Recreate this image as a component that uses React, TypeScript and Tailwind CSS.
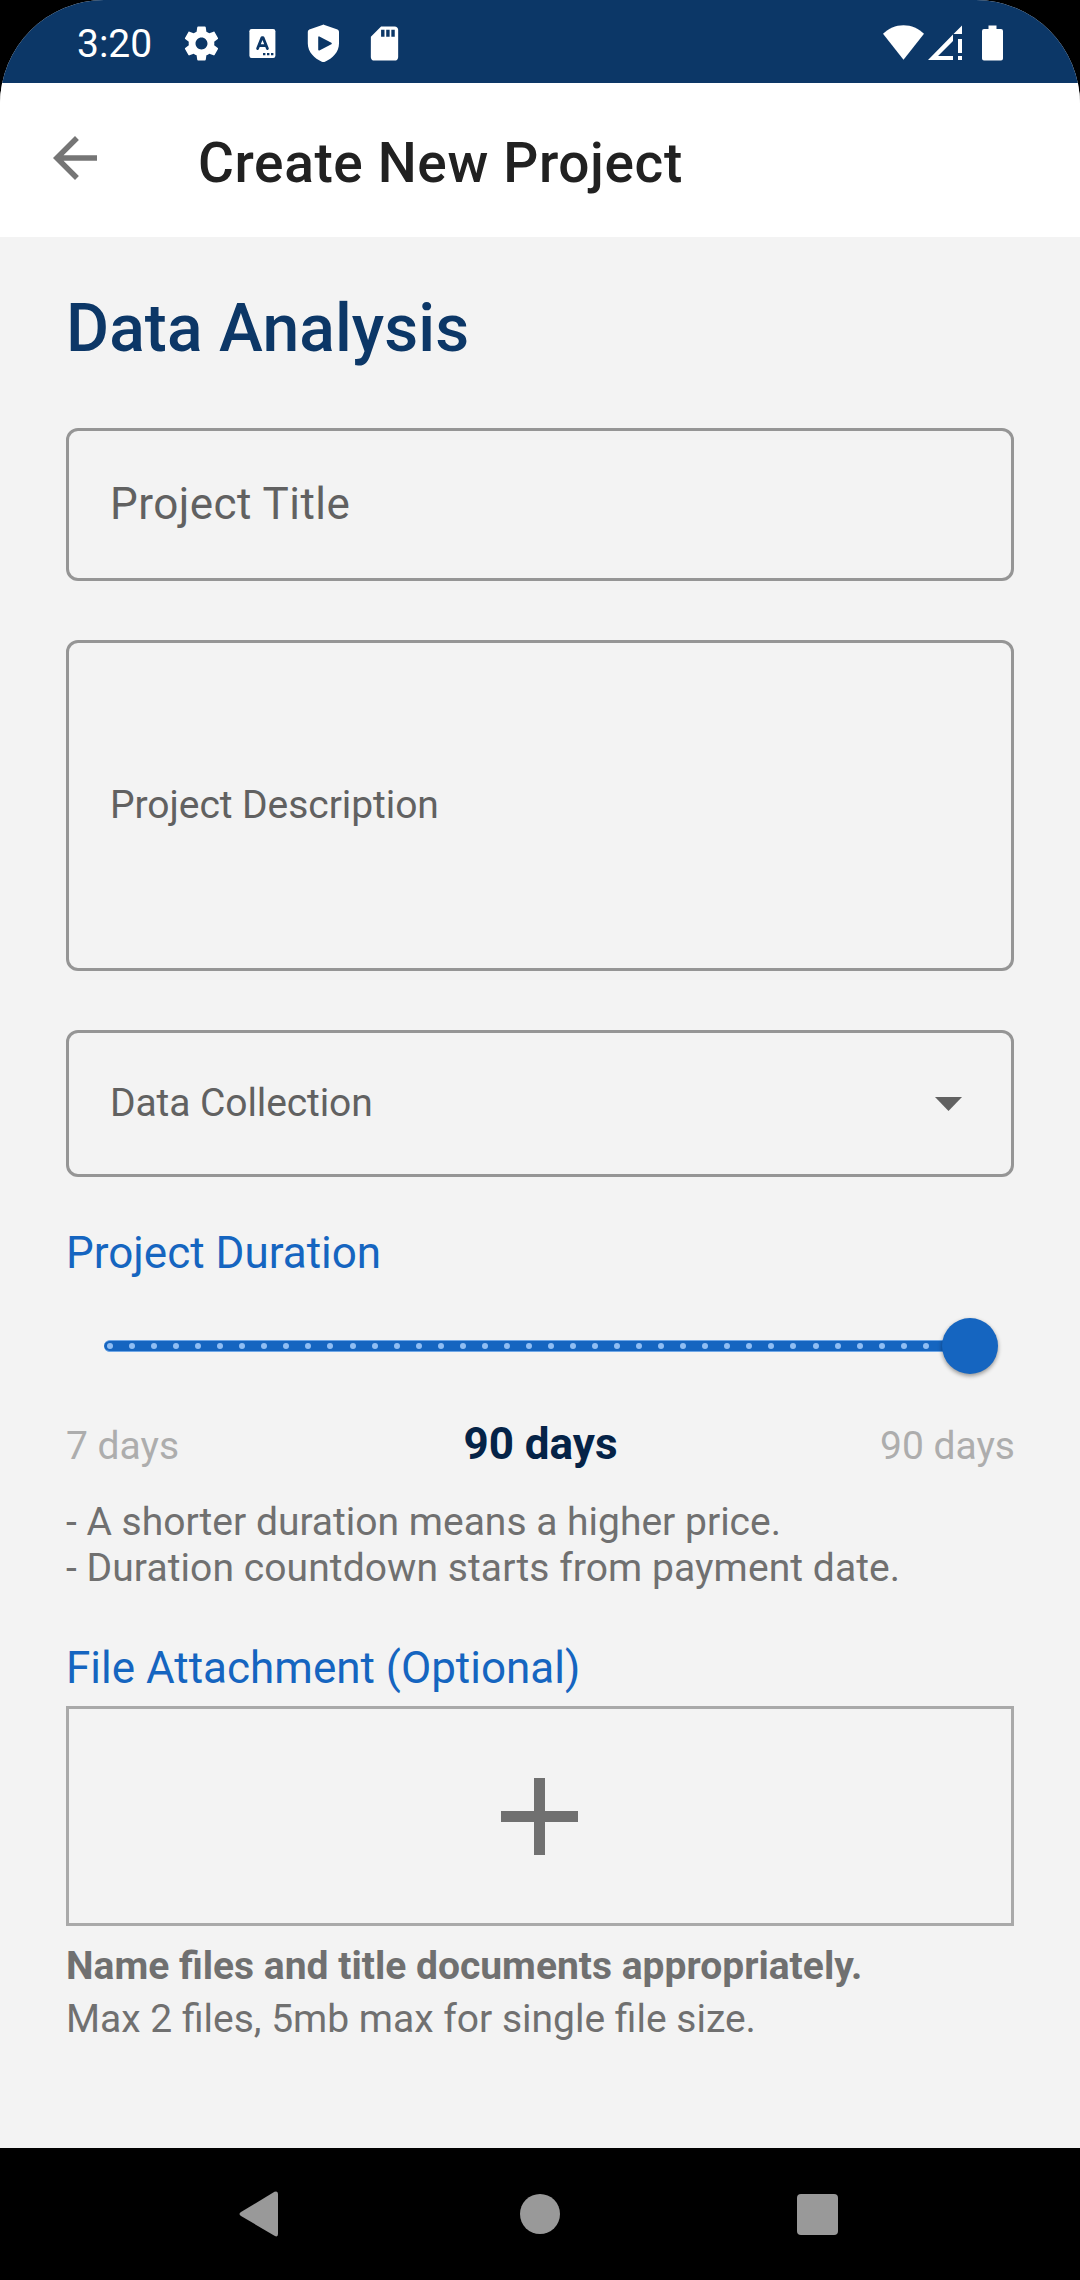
import React, { useState } from 'react';

const MIN_DAYS = 7;
const MAX_DAYS = 90;
const TICKS = 40;

function GearIcon() {
  return (
    <svg className="w-[41px] h-[41px]" viewBox="0 0 24 24" fill="currentColor">
      <path d="M19.43 12.98c.04-.32.07-.64.07-.98s-.03-.66-.07-.98l2.11-1.65c.19-.15.24-.42.12-.64l-2-3.46c-.12-.22-.39-.3-.61-.22l-2.49 1c-.52-.4-1.08-.73-1.69-.98l-.38-2.65C14.46 2.18 14.25 2 14 2h-4c-.25 0-.46.18-.49.42l-.38 2.65c-.61.25-1.17.59-1.69.98l-2.49-1c-.23-.09-.49 0-.61.22l-2 3.46c-.13.22-.07.49.12.64l2.11 1.65c-.04.32-.07.65-.07.98s.03.66.07.98l-2.11 1.65c-.19.15-.24.42-.12.64l2 3.46c.12.22.39.3.61.22l2.49-1c.52.4 1.08.73 1.69.98l.38 2.65c.03.24.24.42.49.42h4c.25 0 .46-.18.49-.42l.38-2.65c.61-.25 1.17-.59 1.69-.98l2.49 1c.23.09.49 0 .61-.22l2-3.46c.12-.22.07-.49-.12-.64l-2.11-1.65zM12 15.5c-1.93 0-3.5-1.57-3.5-3.5s1.57-3.5 3.5-3.5 3.5 1.57 3.5 3.5-1.57 3.5-3.5 3.5z" />
    </svg>
  );
}

function KeyboardIcon() {
  return (
    <svg className="w-[41px] h-[41px]" viewBox="0 0 41 41">
      <rect x="7.4" y="6" width="26" height="29" rx="2.2" fill="#fff" />
      <path
        d="M15.6 25.600 20 14.600h1L25.400 25.600M17.500 22.600h6"
        fill="none"
        stroke="#0c3767"
        strokeWidth="2.8"
        strokeLinecap="round"
        strokeLinejoin="round"
      />
      <path d="M21 30h2.400v2.200H21zM25 30h2.400v2.200H25zM29 30h2.400v2.200H29z" fill="#0c3767" />
    </svg>
  );
}

function ShieldIcon() {
  return (
    <svg className="w-[41px] h-[41px]" viewBox="0 0 41 41">
      <path
        d="M19.300 1.900Q20.400 1.300 21.500 1.900L34.500 6.500Q36 7.200 36 8.700V20.500C36 29 29.500 35.500 22 38.700Q20.400 39.300 18.800 38.700C11.500 35.500 4.800 29 4.800 20.500V8.700Q4.800 7.200 6.300 6.500z"
        fill="#fff"
      />
      <path
        d="M16 14.200v12.600L28 20.500z"
        fill="#0c3767"
        stroke="#0c3767"
        strokeWidth="1.600"
        strokeLinejoin="round"
      />
    </svg>
  );
}

function SdCardIcon() {
  return (
    <svg className="w-[41px] h-[41px]" viewBox="0 0 24 24" fill="currentColor">
      <path d="M18 2h-8L4.020 8 4 20c0 1.100.9 2 2 2h12c1.100 0 2-.9 2-2V4c0-1.100-.9-2-2-2zm-6 6h-2V4h2v4zm3 0h-2V4h2v4zm3 0h-2V4h2v4z" />
    </svg>
  );
}

function StatusBar() {
  return (
    <div className="h-[83px] bg-[#0c3767] text-white flex items-start justify-between pl-[77px] pr-[77px]">
      <div className="flex items-start pt-[23px]">
        <span className="w-[104px] text-[39px] leading-[43px]">3:20</span>
        <div className="flex gap-5">
          <GearIcon />
          <KeyboardIcon />
          <ShieldIcon />
          <SdCardIcon />
        </div>
      </div>
      <div className="flex pt-[25px]">
        {/* Wifi */}
        <svg className="w-[41px] h-[36px]" viewBox="0 0 41 36" fill="currentColor">
          <path d="M0 8.800C5.500 3.500 12.500.2 20.500.2S35.500 3.500 41 8.800L20.500 34.800z" />
        </svg>
        {/* Mobile signal */}
        <svg className="w-[35px] h-[36px] ml-[4px]" viewBox="0 0 35 36" fill="currentColor">
          <path d="M34 .5V9h-8.500zM25 9.500V16L10 31h15v4H0z" />
          <path d="M30 14h4v14h-4zM30 31h4v4h-4z" />
        </svg>
        {/* Battery */}
        <svg className="w-[21px] h-[36px] ml-[19px]" viewBox="0 0 21 36" fill="currentColor">
          <path d="M6.500.5h8V4H19a2 2 0 0 1 2 2v27.500a2 2 0 0 1-2 2H2a2 2 0 0 1-2-2V6a2 2 0 0 1 2-2h4.500z" />
        </svg>
      </div>
    </div>
  );
}

function AppBar() {
  return (
    <header className="h-[154px] bg-white flex items-start pl-[42px]">
      <button className="mt-[42px] text-[#757575]" aria-label="Back">
        <svg className="w-[66px] h-[66px]" viewBox="0 0 24 24" fill="currentColor">
          <path d="M20 11H7.830l5.590-5.590L12 4l-8 8 8 8 1.410-1.410L7.830 13H20v-2z" />
        </svg>
      </button>
      <h1 className="ml-[90px] mt-[48px] text-[55px] leading-[64px] tracking-[0.62px] font-medium text-[#212121]">
        Create New Project
      </h1>
    </header>
  );
}

function DurationSlider({ value }: { value: number }) {
  const percent = ((value - MIN_DAYS) / (MAX_DAYS - MIN_DAYS)) * 100;

  return (
    <div className="mt-[39px] h-14 pl-[38px] pr-[38px] flex items-center">
      <div className="relative w-full h-3 rounded-full bg-[#1565c0] border-y border-[#6ea6e6] px-[3px] flex items-center justify-between">
        {Array.from({ length: TICKS }, (_, i) => (
          <span key={i} className="w-[6px] h-[6px] rounded-full bg-[#8fbdf3]" />
        ))}
        <div
          className="absolute -top-[23px] w-14 h-14 -ml-[34px] rounded-full bg-[#1565c0] shadow-[0_2px_4px_rgba(0,0,0,0.4)]"
          style={{ left: `${percent}%` }}
        />
      </div>
    </div>
  );
}

export default function App() {
  const [duration] = useState(MAX_DAYS);

  return (
    <div className="w-[1080px] h-[2280px] bg-black font-['Roboto',sans-serif] flex flex-col">
      <div className="flex-1 rounded-t-[104px] overflow-hidden bg-[#f3f3f3]">
        <StatusBar />
        <AppBar />

        <main className="px-[66px] pt-[52px] text-[39px]">
          <h2 className="text-[66px] leading-[80px] tracking-[0.1px] font-medium text-[#0c3767]">Data Analysis</h2>

          {/* Fields */}
          <div className="mt-[59px] h-[153px] border-[3px] border-[#959595] rounded-[12px] px-[41px] pb-[2px] flex items-center text-[44px] tracking-[0.48px] text-[#616161]">
            Project Title
          </div>
          <div className="mt-[59px] h-[331px] border-[3px] border-[#959595] rounded-[12px] px-[41px] flex items-center tracking-[-0.06px] text-[#616161]">
            Project Description
          </div>
          <div className="mt-[59px] h-[147px] border-[3px] border-[#959595] rounded-[12px] pl-[41px] pr-[49px] flex items-center justify-between text-[#616161]">
            <span className="tracking-[-0.1px]">Data Collection</span>
            <svg className="w-[27px] h-[14px]" viewBox="0 0 27 14" fill="currentColor">
              <path d="M0 0h27L13.500 14z" />
            </svg>
          </div>

          {/* Duration */}
          <h3 className="mt-[50px] text-[44px] leading-[52px] text-[#1565c0]">Project Duration</h3>
          <DurationSlider value={duration} />
          <div className="mt-[44px] h-[52px] -mr-px grid grid-cols-3 items-baseline leading-[52px] text-[#adadad]">
            <span>{MIN_DAYS} days</span>
            <span className="text-center text-[44px] font-bold text-[#052347]">{duration} days</span>
            <span className="text-right">{MAX_DAYS} days</span>
          </div>
          <div className="mt-[29px] leading-[46px] text-[#707070]">
            <p>- A shorter duration means a higher price.</p>
            <p className="tracking-[0.08px]">- Duration countdown starts from payment date.</p>
          </div>

          {/* Attachment */}
          <h3 className="mt-[51px] text-[44px] leading-[52px] text-[#1565c0]">File Attachment (Optional)</h3>
          <button
            className="mt-[12px] w-full h-[220px] border-[3px] border-[#a9a9a9] pr-px flex items-center justify-center text-[#707070]"
            aria-label="Add file"
          >
            <svg className="w-[77px] h-[77px]" viewBox="0 0 77 77" fill="currentColor">
              <path d="M33 0h11v33h33v11H44v33H33V44H0V33h33z" />
            </svg>
          </button>
          <p className="mt-[17px] leading-[46px] font-bold text-[#707070]">
            Name files and title documents appropriately.
          </p>
          <p className="mt-[7px] leading-[46px] text-[#707070]">
            Max 2 files, 5mb max for single file size.
          </p>
        </main>
      </div>

      {/* System navigation */}
      <nav className="h-[132px] flex items-center justify-between pl-[239px] pr-[242px] text-[#999999]">
        <svg className="w-[40px] h-[46px]" viewBox="0 0 40 46" fill="currentColor">
          <path d="M35.500.8Q39 -.6 39 3v40Q39 46.600 35.500 44.800L2 25Q-1 23 2 21z" />
        </svg>
        <div className="ml-[4px] w-10 h-10 rounded-full bg-[#999999]" />
        <div className="w-[41px] h-[41px] rounded-[4px] bg-[#999999]" />
      </nav>
    </div>
  );
}
